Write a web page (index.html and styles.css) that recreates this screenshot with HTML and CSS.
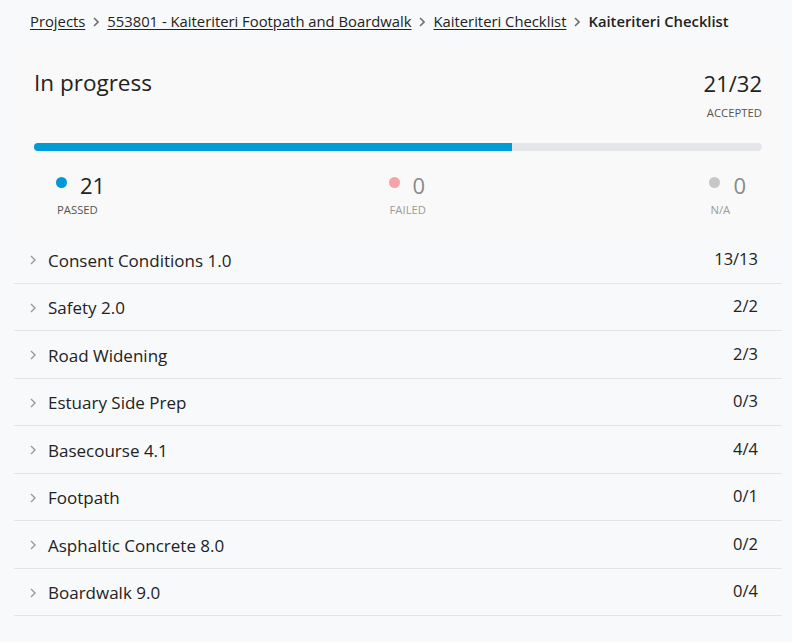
FILE: index.html
```html
<!DOCTYPE html>
<html>
<head>
<meta charset="utf-8">
<link rel="stylesheet" href="styles.css">
</head>
<body>
<div class="page">
  <nav class="breadcrumb">
    <a href="#">Projects</a>
    <svg class="sep" viewBox="0 0 6 10" width="6" height="10"><path d="M1 1l4 4-4 4" fill="none" stroke="#707070" stroke-width="1.6"/></svg>
    <a href="#">553801 - Kaiteriteri Footpath and Boardwalk</a>
    <svg class="sep" viewBox="0 0 6 10" width="6" height="10"><path d="M1 1l4 4-4 4" fill="none" stroke="#707070" stroke-width="1.6"/></svg>
    <a href="#">Kaiteriteri Checklist</a>
    <svg class="sep" viewBox="0 0 6 10" width="6" height="10"><path d="M1 1l4 4-4 4" fill="none" stroke="#707070" stroke-width="1.6"/></svg>
    <span class="current">Kaiteriteri Checklist</span>
  </nav>

  <section class="summary">
    <div class="summary-head">
      <h1 class="status">In progress</h1>
      <div class="total">
        <div class="total-num">21/32</div>
        <div class="total-label">ACCEPTED</div>
      </div>
    </div>
    <div class="bar"><div class="bar-fill" style="width:65.625%"></div></div>
    <div class="stats">
      <div class="stat">
        <span class="dot dot-pass"></span><span class="stat-num">21</span>
        <span class="stat-label">PASSED</span>
      </div>
      <div class="stat stat-zero">
        <span class="dot dot-fail"></span><span class="stat-num">0</span>
        <span class="stat-label">FAILED</span>
      </div>
      <div class="stat stat-zero">
        <span class="dot dot-na"></span><span class="stat-num">0</span>
        <span class="stat-label">N/A</span>
      </div>
    </div>
  </section>

  <ul class="list">
    <li class="row"><svg class="chev" viewBox="0 0 6 10" width="6" height="10"><path d="M1 1l4 4-4 4" fill="none" stroke="#999" stroke-width="1.4"/></svg><span class="name">Consent Conditions 1.0</span><span class="count">13/13</span></li>
    <li class="row"><svg class="chev" viewBox="0 0 6 10" width="6" height="10"><path d="M1 1l4 4-4 4" fill="none" stroke="#999" stroke-width="1.4"/></svg><span class="name">Safety 2.0</span><span class="count">2/2</span></li>
    <li class="row"><svg class="chev" viewBox="0 0 6 10" width="6" height="10"><path d="M1 1l4 4-4 4" fill="none" stroke="#999" stroke-width="1.4"/></svg><span class="name">Road Widening</span><span class="count">2/3</span></li>
    <li class="row"><svg class="chev" viewBox="0 0 6 10" width="6" height="10"><path d="M1 1l4 4-4 4" fill="none" stroke="#999" stroke-width="1.4"/></svg><span class="name">Estuary Side Prep</span><span class="count">0/3</span></li>
    <li class="row"><svg class="chev" viewBox="0 0 6 10" width="6" height="10"><path d="M1 1l4 4-4 4" fill="none" stroke="#999" stroke-width="1.4"/></svg><span class="name">Basecourse 4.1</span><span class="count">4/4</span></li>
    <li class="row"><svg class="chev" viewBox="0 0 6 10" width="6" height="10"><path d="M1 1l4 4-4 4" fill="none" stroke="#999" stroke-width="1.4"/></svg><span class="name">Footpath</span><span class="count">0/1</span></li>
    <li class="row"><svg class="chev" viewBox="0 0 6 10" width="6" height="10"><path d="M1 1l4 4-4 4" fill="none" stroke="#999" stroke-width="1.4"/></svg><span class="name">Asphaltic Concrete 8.0</span><span class="count">0/2</span></li>
    <li class="row"><svg class="chev" viewBox="0 0 6 10" width="6" height="10"><path d="M1 1l4 4-4 4" fill="none" stroke="#999" stroke-width="1.4"/></svg><span class="name">Boardwalk 9.0</span><span class="count">0/4</span></li>
  </ul>
</div>
</body>
</html>
```

FILE: styles.css
```css
* { box-sizing: border-box; }
html, body { margin: 0; padding: 0; }
body {
  background: #f8f9fb;
  font-family: "Segoe UI", "Open Sans", sans-serif;
  color: #1f1f1f;
}
.page { padding: 0 10px 0 14px; }

.breadcrumb {
  display: flex;
  align-items: center;
  gap: 7px;
  height: 46px;
  padding: 0 16px 4px;
  font-size: 14.8px;
}
.breadcrumb a { color: #222; text-decoration: underline; text-underline-offset: 2px; }
.breadcrumb .sep { flex: none; margin: 1px 1px 0; }
.breadcrumb .current { font-weight: 600; color: #222; }

.summary {
  background: #f9f9f9;
  padding: 22px 20px 19px;
}
.summary-head {
  display: flex;
  justify-content: space-between;
  align-items: flex-start;
}
.status {
  margin: 0;
  font-size: 22.5px;
  font-weight: 400;
  line-height: 30px;
  color: #222;
}
.total { text-align: right; }
.total-num { font-size: 22px; line-height: 30px; color: #222; }
.total-label { font-size: 11.3px; color: #555; margin-top: 7px; }

.bar {
  margin-top: 23px;
  height: 8px;
  border-radius: 4px;
  background: #e5e6ea;
  overflow: hidden;
}
.bar-fill { height: 100%; background: #009cd6; }

.stats {
  display: flex;
  justify-content: space-between;
  padding: 20px 16px 0 22px;
}
.stat {
  display: grid;
  grid-template-columns: 12px auto;
  column-gap: 12px;
  align-items: center;
}
.dot { width: 11px; height: 11px; border-radius: 50%; align-self: start; margin-top: 6px; }
.dot-pass { background: #0097d7; }
.dot-fail { background: #f6a2a6; }
.dot-na { background: #c7c7c7; }
.stat-num { font-size: 22px; line-height: 28px; color: #222; }
.stat-label {
  grid-column: 1 / 3;
  font-size: 11.3px;
  color: #555;
  margin-top: 3px;
  padding-left: 1px;
}
.stat-zero .stat-num { color: #8a8a8a; }
.stat-zero .stat-label { color: #9a9a9a; }

.list { list-style: none; margin: 0; padding: 0; }
.row {
  display: flex;
  align-items: center;
  height: 47.5px;
  border-bottom: 1px solid #e3e5e8;
  padding: 2px 24px 0 16px;
  font-size: 17px;
}
.chev { flex: none; margin: 0 12px 0 0; }
.name { flex: 1; color: #222; }
.count { font-size: 16.5px; color: #222; margin-top: -4px; }
```
